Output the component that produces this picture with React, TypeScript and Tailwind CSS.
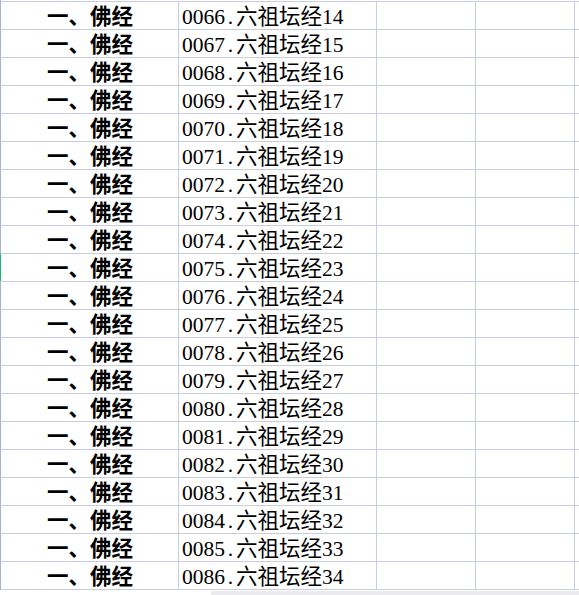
const rows = Array.from({ length: 21 }, (_, i) => ({
  no: String(66 + i).padStart(4, "0"),
  part: 14 + i,
}));

const fontStack = { fontFamily: '"Liberation Serif", "Noto Sans CJK SC", serif' };

export default function App() {
  return (
    <div className="w-[579px] h-[595px] bg-white overflow-hidden flex flex-col text-black" style={fontStack}>
      <div className="h-[1px] border-l border-[#aab3cc]" />
      {rows.map((r, i) => (
        <div
          key={r.no}
          className={
            "flex h-[28px] border-t border-t-[#c8cedf] border-l " +
            (i === 9 ? "border-l-[#21b37c]" : "border-l-[#aab3cc]")
          }
        >
          <div className="w-[178px] border-r border-[#c8cedf] flex items-end justify-center pb-[1px] pl-[1px] text-[21.5px] leading-[22px] font-bold">
            一、佛经
          </div>
          <div className="w-[198px] border-r border-[#c8cedf] flex items-end pl-[3px] pb-[1px] text-[21.5px] leading-[22px] whitespace-nowrap">
            {r.no}
            <span className="inline-block w-[11px] text-center">.</span>
            六祖坛经{r.part}
          </div>
          <div className="w-[99px] border-r border-[#c8cedf]" />
          <div className="w-[99px] border-r border-[#c8cedf]" />
          <div className="flex-1" />
        </div>
      ))}
      <div className="h-[1px] bg-[#c8cedf] border-l border-[#aab3cc]" />
      <div className="h-[1px]" />
      <div className="flex h-[4px]">
        <div className="w-[211px] bg-white" />
        <div className="flex-1 bg-[#ebebef]" />
      </div>
    </div>
  );
}
